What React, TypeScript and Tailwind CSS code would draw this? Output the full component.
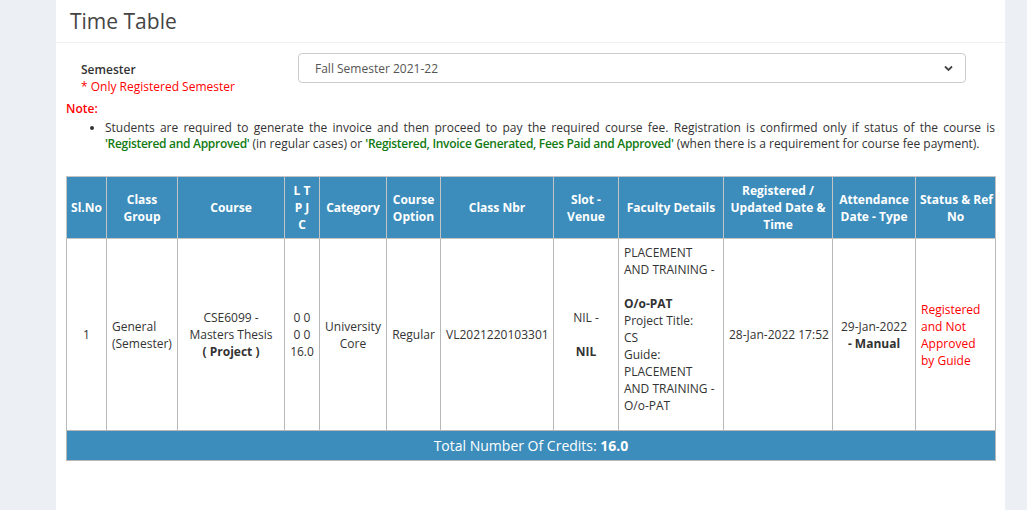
import React from "react";

const th = "border border-[#c4c4c4] px-[4px] py-[5px] text-center align-middle font-bold text-white text-[12px] leading-[17px] whitespace-nowrap";
const td = "border border-[#b8b8b8] px-[5px] py-[5px] align-middle text-[12px] leading-[17px] text-[#333] whitespace-nowrap";

export default function App() {
  return (
    <div className="flex min-h-[510px] w-full bg-[#ecf0f5] font-['Open_Sans',sans-serif]">
      <div className="w-[56px] shrink-0" />
      <div className="w-[949px] shrink-0 bg-white">
        <div className="h-[43px] border-b border-[#f0f0f0] pl-[14px] pt-[6px]">
          <h1 className="text-[21px] leading-[30px] text-[#444]">Time Table</h1>
        </div>
        <div className="px-[10px] pt-[10px]">
          <div className="flex">
            <div className="w-[232px] shrink-0 pl-[15px] pt-[8px]">
              <div className="text-[12px] leading-[17px] font-semibold text-[#333]">Semester</div>
              <div className="text-[12px] leading-[17px] text-[#ff0000]">* Only Registered Semester</div>
            </div>
            <div className="relative h-[30px] w-[668px] rounded-[4px] border border-[#ccc] bg-white">
              <span className="absolute left-[16px] top-[6px] text-[12px] leading-[17px] text-[#555]">
                Fall Semester 2021-22
              </span>
              <svg className="absolute right-[12px] top-[11px]" width="9" height="7" viewBox="0 0 9 7">
                <polyline points="1,1.5 4.5,5 8,1.5" fill="none" stroke="#444" strokeWidth="1.8" />
              </svg>
            </div>
          </div>
          <div className="mt-[5px] text-[12px] leading-[17px] font-semibold text-[#ff0000]">Note:</div>
          <ul className="mt-[3px] list-disc pl-[39px] text-[12px] leading-[16px] text-[#333]">
            <li>
              <span className="block text-justify [text-align-last:justify]">
                Students are required to generate the invoice and then proceed to pay the required course fee. Registration is confirmed only if status of the course is
              </span>
              <span className="block whitespace-nowrap">
                <span className="font-semibold tracking-[-0.3px] text-[#137a13]">'Registered and Approved'</span> (in regular cases) or{" "}
                <span className="font-semibold tracking-[-0.3px] text-[#137a13]">'Registered, Invoice Generated, Fees Paid and Approved'</span> (when there is a requirement for course fee payment).
              </span>
            </li>
          </ul>
          <table className="mt-[24px] w-[929px] table-fixed border-collapse">
            <colgroup>
              <col className="w-[40px]" />
              <col className="w-[71px]" />
              <col className="w-[107px]" />
              <col className="w-[35px]" />
              <col className="w-[67px]" />
              <col className="w-[54px]" />
              <col className="w-[113px]" />
              <col className="w-[65px]" />
              <col className="w-[105px]" />
              <col className="w-[109px]" />
              <col className="w-[83px]" />
              <col className="w-[80px]" />
            </colgroup>
            <thead>
              <tr className="h-[62px] bg-[#3c8dbc]">
                <th className={th}>Sl.No</th>
                <th className={th}>Class<br />Group</th>
                <th className={th}>Course</th>
                <th className={th}>L T<br />P J<br />C</th>
                <th className={th}>Category</th>
                <th className={th}>Course<br />Option</th>
                <th className={th}>Class Nbr</th>
                <th className={th}>Slot -<br />Venue</th>
                <th className={th}>Faculty Details</th>
                <th className={th}>Registered /<br />Updated Date &amp;<br />Time</th>
                <th className={th}>Attendance<br />Date - Type</th>
                <th className={th}>Status &amp; Ref<br />No</th>
              </tr>
            </thead>
            <tbody>
              <tr className="h-[192px]">
                <td className={td + " text-center text-[#5b2e6b]"}>1</td>
                <td className={td}>General<br />(Semester)</td>
                <td className={td + " text-center"}>CSE6099 -<br />Masters Thesis<br /><b>( Project )</b></td>
                <td className={td + " text-center"}>0 0<br />0 0<br />16.0</td>
                <td className={td + " text-center"}>University<br />Core</td>
                <td className={td + " text-center"}>Regular</td>
                <td className={td + " text-center"}>VL2021220103301</td>
                <td className={td + " text-center"}>NIL -<br /><br /><b>NIL</b></td>
                <td className={td + " align-top pb-[14px]"}>
                  PLACEMENT<br />AND TRAINING -<br /><br /><b>O/o-PAT</b><br />Project Title:<br />CS<br />Guide:<br />PLACEMENT<br />AND TRAINING -<br />O/o-PAT
                </td>
                <td className={td + " text-center"}>28-Jan-2022 17:52</td>
                <td className={td + " text-center"}>29-Jan-2022<br /><b>- Manual</b></td>
                <td className={td + " text-[#ff0000]"}>Registered<br />and Not<br />Approved<br />by Guide</td>
              </tr>
              <tr className="h-[30px] bg-[#3c8dbc]">
                <td colSpan={12} className="border border-[#b8b8b8] text-center text-[14px] leading-[20px] text-white">
                  Total Number Of Credits: <b>16.0</b>
                </td>
              </tr>
            </tbody>
          </table>
        </div>
      </div>
      <div className="flex-1" />
    </div>
  );
}
